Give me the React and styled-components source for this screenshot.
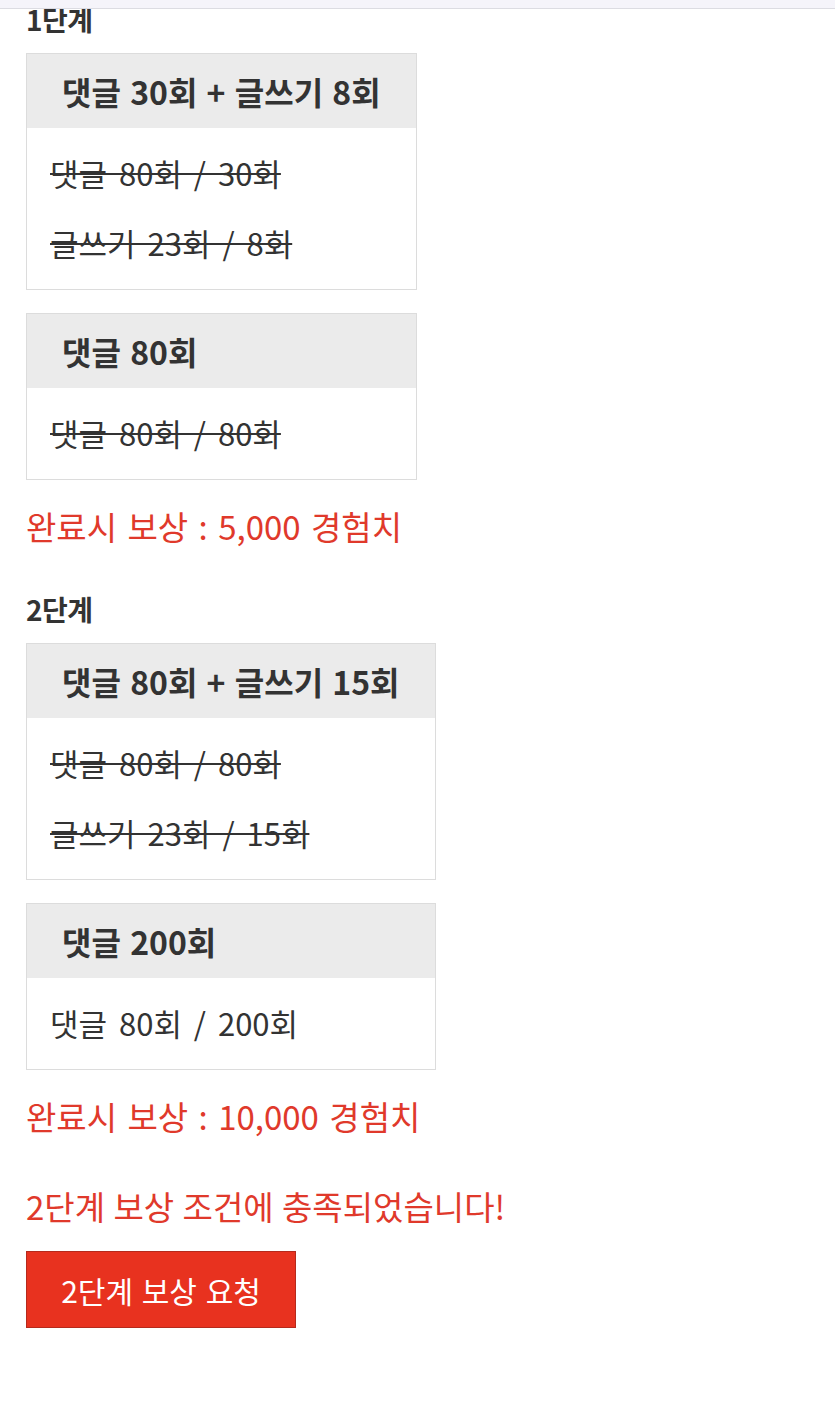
import React from 'react';
import styled, { createGlobalStyle } from "styled-components";

const GlobalStyle = createGlobalStyle`
  body {
    margin: 0;
    background: #fff;
    font-family: "Noto Sans CJK KR", "Noto Sans", sans-serif;
    color: #333;
  }
`;

const TopBar = styled.div`
  position: fixed;
  top: 0;
  left: 0;
  right: 0;
  height: 8px;
  background: #f5f4fa;
  border-bottom: solid 1px #dcdce2;
  z-index: 10;
`;

const Page = styled.div`
  padding: 2px 26px 60px;
  display: flex;
  flex-direction: column;
  align-items: flex-start;
`;

const Stage = styled.section`
  display: flex;
  flex-direction: column;
  align-items: flex-start;
  margin-bottom: ${props => props.last ? "0" : "44px"};
`;

const StageTitle = styled.h3`
  margin: 0;
  font-size: 28px;
  line-height: 34px;
  font-weight: bold;
  letter-spacing: -0.5px;
`;

const MissionList = styled.div`
  display: grid;
  row-gap: 23px;
  margin-top: 17px;
`;

const MissionBox = styled.div`
  border: solid 1px #dcdcdc;
  background: #fff;
`;

const MissionHead = styled.div`
  background: #ebebeb;
  height: 74px;
  line-height: 74px;
  padding: 0 35px;
  font-size: 32px;
  font-weight: bold;
  word-spacing: 2px;
  white-space: nowrap;
`;

const MissionBody = styled.div`
  padding: 23px 23px 24px;
  display: flex;
  flex-direction: column;
  gap: 26px;
`;

const Progress = styled.div`
  font-size: 31px;
  line-height: 44px;
  word-spacing: 5px;
  white-space: nowrap;
  text-decoration: ${props => props.done ? "line-through" : "none"};
  text-decoration-thickness: 2px;
`;

const RedText = styled.p`
  margin: 24px 0 0;
  font-size: 33px;
  line-height: 44px;
  word-spacing: 3px;
  color: #e0392b;
`;

const Notice = styled(RedText)`
  margin-top: 46px;
  word-spacing: 1px;
`;

const RequestButton = styled.button`
  margin-top: 23px;
  width: 270px;
  height: 77px;
  background: #e8321f;
  border: solid 1px #b52a1c;
  color: #fff;
  font-family: inherit;
  font-size: 30px;
  word-spacing: 2px;
  cursor: pointer;
`;

const stages = [
  {
    title: "1단계",
    reward: "5,000",
    missions: [
      { head: "댓글 30회 + 글쓰기 8회", rows: [["댓글 80회 / 30회", true], ["글쓰기 23회 / 8회", true]] },
      { head: "댓글 80회", rows: [["댓글 80회 / 80회", true]] },
    ],
  },
  {
    title: "2단계",
    reward: "10,000",
    missions: [
      { head: "댓글 80회 + 글쓰기 15회", rows: [["댓글 80회 / 80회", true], ["글쓰기 23회 / 15회", true]] },
      { head: "댓글 200회", rows: [["댓글 80회 / 200회", false]] },
    ],
  },
];

function App() {
  return (
    <>
      <GlobalStyle />
      <TopBar />
      <Page>
        {stages.map((stage, i) => (
          <Stage key={stage.title} last={i === stages.length - 1}>
            <StageTitle>{stage.title}</StageTitle>
            <MissionList>
              {stage.missions.map(m => (
                <MissionBox key={m.head}>
                  <MissionHead>{m.head}</MissionHead>
                  <MissionBody>
                    {m.rows.map(([text, done]) => (
                      <Progress key={text} done={done}>{text}</Progress>
                    ))}
                  </MissionBody>
                </MissionBox>
              ))}
            </MissionList>
            <RedText>완료시 보상 : {stage.reward} 경험치</RedText>
          </Stage>
        ))}
        <Notice>2단계 보상 조건에 충족되었습니다!</Notice>
        <RequestButton>2단계 보상 요청</RequestButton>
      </Page>
    </>
  );
}

export default App;
